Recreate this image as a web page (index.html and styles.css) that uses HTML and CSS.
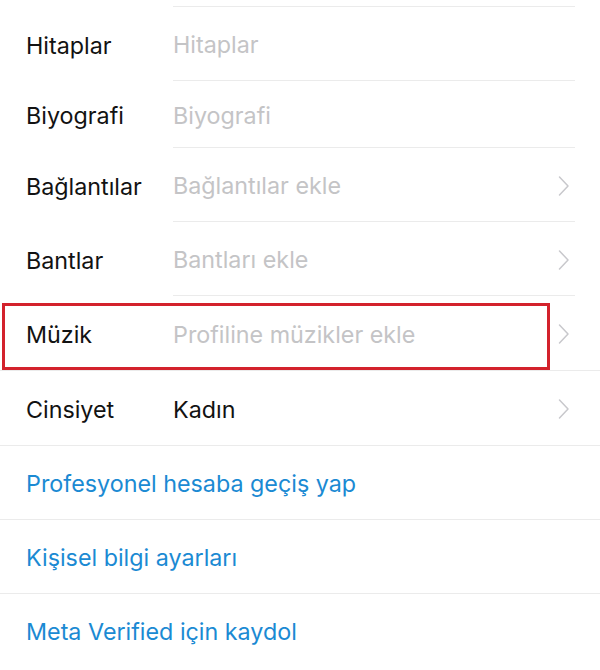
FILE: index.html
```html
<!DOCTYPE html>
<html lang="tr">
<head>
<meta charset="utf-8">
<link rel="stylesheet" href="styles.css">
</head>
<body>
<div class="screen">
  <div class="top-gap"><div class="sep"></div></div>
  <div class="row">
    <div class="label">Hitaplar</div>
    <div class="field"><span class="ph">Hitaplar</span></div>
  </div>
  <div class="row short">
    <div class="label">Biyografi</div>
    <div class="field"><span class="ph">Biyografi</span></div>
  </div>
  <div class="row">
    <div class="label">Bağlantılar</div>
    <div class="field"><span class="ph">Bağlantılar ekle</span><span class="chev"><svg width="12" height="22" viewBox="0 0 12 22"><path d="M1.5 2 L10 11 L1.5 20" fill="none" stroke="#c8c8cc" stroke-width="1.5" stroke-linecap="round" stroke-linejoin="round"/></svg></span></div>
  </div>
  <div class="row">
    <div class="label">Bantlar</div>
    <div class="field"><span class="ph">Bantları ekle</span><span class="chev"><svg width="12" height="22" viewBox="0 0 12 22"><path d="M1.5 2 L10 11 L1.5 20" fill="none" stroke="#c8c8cc" stroke-width="1.5" stroke-linecap="round" stroke-linejoin="round"/></svg></span></div>
  </div>
  <div class="row full highlight">
    <div class="label">Müzik</div>
    <div class="field"><span class="ph">Profiline müzikler ekle</span><span class="chev"><svg width="12" height="22" viewBox="0 0 12 22"><path d="M1.5 2 L10 11 L1.5 20" fill="none" stroke="#c8c8cc" stroke-width="1.5" stroke-linecap="round" stroke-linejoin="round"/></svg></span></div>
    <div class="mark"></div>
  </div>
  <div class="row full">
    <div class="label">Cinsiyet</div>
    <div class="field"><span class="val">Kadın</span><span class="chev"><svg width="12" height="22" viewBox="0 0 12 22"><path d="M1.5 2 L10 11 L1.5 20" fill="none" stroke="#c8c8cc" stroke-width="1.5" stroke-linecap="round" stroke-linejoin="round"/></svg></span></div>
  </div>
  <div class="link-row">Profesyonel hesaba geçiş yap</div>
  <div class="link-row">Kişisel bilgi ayarları</div>
  <div class="link-row last">Meta Verified için kaydol</div>
</div>
</body>
</html>
```

FILE: styles.css
```css
html, body {
  margin: 0;
  padding: 0;
  background: #ffffff;
}
.screen {
  width: 600px;
  height: 670px;
  overflow: hidden;
  font-family: Inter, "Liberation Sans", sans-serif;
  font-size: 23.3px;
  color: #121212;
}
.top-gap {
  height: 7px;
  padding-left: 173px;
  display: flex;
  align-items: flex-end;
}
.top-gap .sep {
  flex: 1;
  margin-right: 25px;
  border-bottom: 1px solid #ebebeb;
}
.row {
  position: relative;
  display: flex;
  height: 74px;
  padding-left: 26px;
}
.row.short {
  height: 67px;
}
.label {
  width: 147px;
  display: flex;
  align-items: center;
  padding-top: 2px;
}
.field {
  flex: 1;
  display: flex;
  align-items: center;
  justify-content: space-between;
  border-bottom: 1px solid #ebebeb;
  margin-right: 25px;
  padding-top: 2px;
}
.row.full {
  border-bottom: 1px solid #ebebeb;
}
.row.full .field {
  border-bottom: none;
}
.ph {
  color: #c4c4c6;
}
.val {
  color: #121212;
}
.chev {
  display: flex;
  margin-right: 5px;
}
.mark {
  position: absolute;
  left: 2px;
  top: 7px;
  width: 542px;
  height: 61px;
  border: 3px solid #d3222c;
}
.link-row {
  height: 74px;
  display: flex;
  align-items: center;
  padding-left: 26px;
  padding-top: 1px;
  box-sizing: border-box;
  color: #1b8ad3;
  border-bottom: 1px solid #ebebeb;
}
.link-row.last {
  border-bottom: none;
}
```
